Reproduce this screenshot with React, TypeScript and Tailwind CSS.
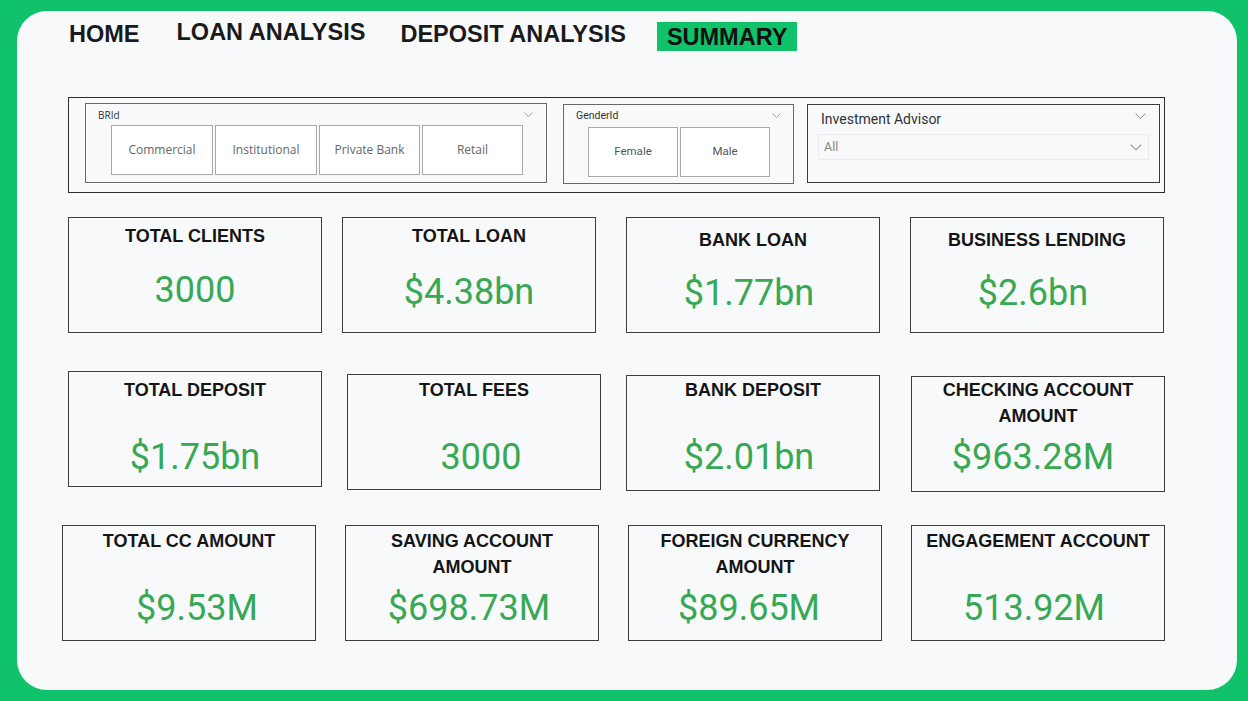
import React from "react";

type Card = {
  title: string[];
  value: string;
  box: string;
  titlePad: string;
  valueGap: string;
  valueShift?: string;
};

const rowOne: Card[] = [
  { title: ["TOTAL CLIENTS"], value: "3000", box: "ml-[51px]", titlePad: "pt-[5px]", valueGap: "mt-[21px]" },
  { title: ["TOTAL LOAN"], value: "$4.38bn", box: "ml-[20px]", titlePad: "pt-[5px]", valueGap: "mt-[23px]" },
  { title: ["BANK LOAN"], value: "$1.77bn", box: "ml-[30px]", titlePad: "pt-[9px]", valueGap: "mt-[20px]", valueShift: "pr-[8px]" },
  { title: ["BUSINESS LENDING"], value: "$2.6bn", box: "ml-[30px]", titlePad: "pt-[9px]", valueGap: "mt-[20px]", valueShift: "pr-[8px]" },
];

const rowTwo: Card[] = [
  { title: ["TOTAL DEPOSIT"], value: "$1.75bn", box: "ml-[51px]", titlePad: "pt-[5px]", valueGap: "mt-[34px]" },
  { title: ["TOTAL FEES"], value: "3000", box: "ml-[25px] mt-[3px]", titlePad: "pt-[2px]", valueGap: "mt-[34px]", valueShift: "pl-[14px]" },
  { title: ["BANK DEPOSIT"], value: "$2.01bn", box: "ml-[25px] mt-[4px]", titlePad: "pt-[1px]", valueGap: "mt-[34px]", valueShift: "pr-[8px]" },
  { title: ["CHECKING ACCOUNT", "AMOUNT"], value: "$963.28M", box: "ml-[31px] mt-[5px]", titlePad: "pt-0", valueGap: "mt-[8px]", valueShift: "pr-[10px]" },
];

const rowThree: Card[] = [
  { title: ["TOTAL CC AMOUNT"], value: "$9.53M", box: "ml-[45px]", titlePad: "pt-[2px]", valueGap: "mt-[34px]", valueShift: "pl-[16px]" },
  { title: ["SAVING ACCOUNT", "AMOUNT"], value: "$698.73M", box: "ml-[29px]", titlePad: "pt-[2px]", valueGap: "mt-[8px]", valueShift: "pr-[6px]" },
  { title: ["FOREIGN CURRENCY", "AMOUNT"], value: "$89.65M", box: "ml-[29px]", titlePad: "pt-[2px]", valueGap: "mt-[8px]", valueShift: "pr-[12px]" },
  { title: ["ENGAGEMENT ACCOUNT"], value: "513.92M", box: "ml-[29px]", titlePad: "pt-[2px]", valueGap: "mt-[34px]", valueShift: "pr-[8px]" },
];

const Chevron = ({ w = 10 }: { w?: number }) => (
  <svg width={w} height={w / 2 + 1} viewBox="0 0 10 6" fill="none">
    <polyline points="0.5,0.5 5,5 9.5,0.5" stroke="#8a8a8a" strokeWidth="0.9" />
  </svg>
);

const KpiCard = ({ card }: { card: Card }) => (
  <div className={`${card.box} w-[254px] h-[116px] shrink-0 border border-[#3d3d3d] bg-[#f8f9fb] flex flex-col`}>
    <div className={`${card.titlePad} text-center font-['Liberation_Sans',Arial,sans-serif] font-bold text-[18px] leading-[26px] text-[#151515]`}>
      {card.title.map((t) => (
        <div key={t}>{t}</div>
      ))}
    </div>
    <div className={`${card.valueGap} ${card.valueShift ?? ""} text-center font-['Roboto',sans-serif] text-[36px] leading-[40px] text-[#37a853]`}>
      {card.value}
    </div>
  </div>
);

const SlicerButton = ({ label, w }: { label: string; w: string }) => (
  <div className={`${w} h-[50px] bg-white border border-[#a9a9a9] flex items-center justify-center text-[12px] text-[#666] font-['Open_Sans',sans-serif]`}>
    {label}
  </div>
);

const App = () => {
  return (
    <div className="w-[1248px] h-[701px] bg-[#10c36b] pt-[11px] pl-[17px] pr-[11px] pb-[11px]">
      <div className="h-full rounded-[30px] bg-[#f8f9fb] flex flex-col">
        {/* page tabs */}
        <div className="h-[86px] flex items-start font-['Liberation_Sans',Arial,sans-serif] font-bold text-[23.5px] leading-[26px] text-[#1a1a1a]">
          <div className="ml-[52px] mt-[10px]">HOME</div>
          <div className="ml-[37px] mt-[8px]">LOAN ANALYSIS</div>
          <div className="ml-[35px] mt-[10px]">DEPOSIT ANALYSIS</div>
          <div className="ml-[31px] mt-[11px] h-[29px] px-[10px] bg-[#10c36b] leading-[30px] text-[#111]">SUMMARY</div>
        </div>

        {/* slicers */}
        <div className="ml-[51px] w-[1097px] h-[96px] border border-[#2e2e2e] flex items-start pl-[16px] pt-[5px]">
          <div className="w-[462px] h-[80px] border border-[#6a6a6a] flex flex-col">
            <div className="h-[21px] flex items-start justify-between pl-[12px] pr-[13px]">
              <span className="mt-[5px] text-[10px] leading-[12px] text-[#333] font-['Open_Sans',sans-serif]">BRId</span>
              <span className="mt-[8px]"><Chevron w={9} /></span>
            </div>
            <div className="flex gap-[2px] pl-[25px]">
              <SlicerButton label="Commercial" w="w-[102px]" />
              <SlicerButton label="Institutional" w="w-[102px]" />
              <SlicerButton label="Private Bank" w="w-[101px]" />
              <SlicerButton label="Retail" w="w-[101px]" />
            </div>
          </div>

          <div className="ml-[16px] mt-[1px] w-[231px] h-[80px] border border-[#6a6a6a] flex flex-col">
            <div className="h-[22px] flex items-start justify-between pl-[12px] pr-[12px]">
              <span className="mt-[5px] text-[10.5px] leading-[12px] text-[#333] font-['Roboto',sans-serif]">GenderId</span>
              <span className="mt-[8px]"><Chevron w={9} /></span>
            </div>
            <div className="flex gap-[2px] pl-[24px] font-['Roboto',sans-serif]">
              <div className="w-[90px] h-[50px] bg-white border border-[#a9a9a9] flex items-center justify-center text-[11.5px] text-[#555]">Female</div>
              <div className="w-[90px] h-[50px] bg-white border border-[#a9a9a9] flex items-center justify-center text-[11.5px] text-[#555]">Male</div>
            </div>
          </div>

          <div className="ml-[13px] mt-[1px] w-[353px] h-[79px] border border-[#3a3a3a] flex flex-col px-[10px] font-['Roboto',sans-serif]">
            <div className="h-[29px] flex items-start justify-between pl-[3px] pr-[3px]">
              <span className="mt-[5px] text-[14px] leading-[18px] text-[#333]">Investment Advisor</span>
              <span className="mt-[8px]"><Chevron w={11} /></span>
            </div>
            <div className="h-[26px] border border-[#ececec] flex items-center justify-between pl-[5px] pr-[6px]">
              <span className="text-[12.5px] text-[#888]">All</span>
              <Chevron w={12} />
            </div>
          </div>
        </div>

        {/* kpi cards */}
        <div className="mt-[24px] flex items-start">
          {rowOne.map((c) => (
            <KpiCard key={c.value + c.title[0]} card={c} />
          ))}
        </div>
        <div className="mt-[38px] flex items-start">
          {rowTwo.map((c) => (
            <KpiCard key={c.value + c.title[0]} card={c} />
          ))}
        </div>
        <div className="mt-[33px] flex items-start">
          {rowThree.map((c) => (
            <KpiCard key={c.value + c.title[0]} card={c} />
          ))}
        </div>
      </div>
    </div>
  );
};

export default App;
